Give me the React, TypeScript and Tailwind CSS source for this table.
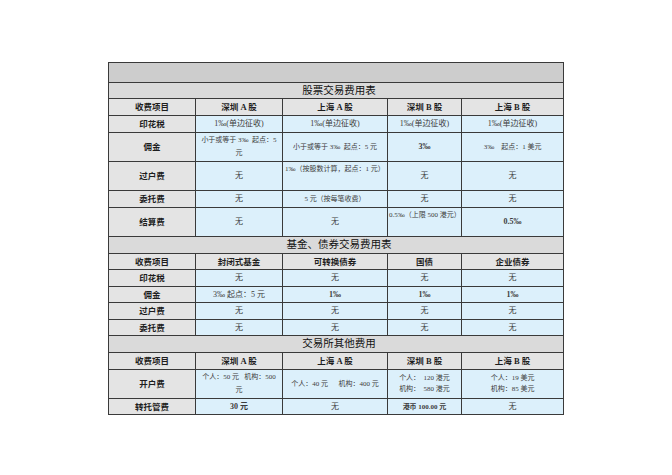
import React from "react";

const F = { fontFamily: '"Liberation Serif", "Noto Sans CJK SC", serif' };

type Cell = { t: React.ReactNode; cls?: string };

const L = "bg-[#e4e4e4] text-[#1e1e1e] font-bold text-[8.5px] border border-[#3a3a3a] text-center align-middle p-0 leading-[10px]";
const H = "bg-[#e4e4e4] text-[#1e1e1e] font-bold text-[8.5px] border border-[#3a3a3a] text-center align-middle p-0 leading-[10px]";
const V = "bg-[#dcf0fb] text-[#3c3c3c] text-[8px] border border-[#3a3a3a] text-center align-middle p-0 leading-[10px]";

function Title({ text, h }: { text: string; h: string }) {
  return (
    <tr className={h}>
      <td colSpan={5} className="bg-[#dadada] border border-[#3a3a3a] text-center align-middle p-0 text-[10.5px] text-[#111] leading-[12px]">
        <span className="pl-[6px]">{text}</span>
      </td>
    </tr>
  );
}

function Row({ label, cells, h, header }: { label: string; cells: Cell[]; h: string; header?: boolean }) {
  return (
    <tr className={h}>
      <td className={L}>{label}</td>
      {cells.map((c, i) => (
        <td key={i} className={(header ? H : V) + " " + (c.cls ?? "")}>
          {c.t}
        </td>
      ))}
    </tr>
  );
}

const s = (t: React.ReactNode, cls?: string): Cell => ({ t, cls });

export default function App() {
  return (
    <div className="w-[672px] h-[475px] bg-white pt-[62px] pl-[108px]" style={F}>
      <table className="table-fixed border-collapse border-[1.5px] border-[#2e2e2e] w-[455px]">
        <colgroup>
          <col className="w-[87px]" />
          <col className="w-[87px]" />
          <col className="w-[105px]" />
          <col className="w-[74px]" />
          <col className="w-[102px]" />
        </colgroup>
        <tbody>
          <tr className="h-[20px]">
            <td colSpan={5} className="bg-[#cdcdcd] border border-[#3a3a3a] p-0"></td>
          </tr>
          <Title text="股票交易费用表" h="h-[16px]" />
          <Row header h="h-[17px]" label="收费项目" cells={[s("深圳 A 股"), s("上海 A 股"), s("深圳 B 股"), s("上海 B 股")]} />
          <Row h="h-[17px]" label="印花税" cells={[s("1‰(单边征收)"), s("1‰(单边征收)"), s("1‰(单边征收)"), s("1‰(单边征收)")]} />
          <Row
            h="h-[29px]"
            label="佣金"
            cells={[
              s(<div className="px-[3px] text-[7px] leading-[13px]">小于或等于 3‰&nbsp; 起点：5 元</div>),
              s(<div className="text-[7px] whitespace-nowrap">小于或等于 3‰&nbsp; 起点：5 元</div>),
              s("3‰", "font-bold"),
              s(<div className="text-[7px] whitespace-nowrap">3‰&nbsp;&nbsp;&nbsp; 起点：1 美元</div>),
            ]}
          />
          <Row
            h="h-[29px]"
            label="过户费"
            cells={[
              s("无"),
              s(<div className="text-[7px] whitespace-nowrap pl-[2px] pt-[2px] text-left">1‰（按股数计算，起点：1 元）</div>, "!align-top"),
              s("无"),
              s("无"),
            ]}
          />
          <Row h="h-[17px]" label="委托费" cells={[s("无"), s(<span className="text-[7px]">5 元（按每笔收费）</span>), s("无"), s("无")]} />
          <Row
            h="h-[29px]"
            label="结算费"
            cells={[
              s("无"),
              s("无"),
              s(<div className="text-[7px] whitespace-nowrap overflow-hidden w-[73px] pl-[1px] pt-[2px] text-left">0.5‰（上限 500 港元）</div>, "!align-top"),
              s("0.5‰", "font-bold"),
            ]}
          />
          <Title text="基金、债券交易费用表" h="h-[17px]" />
          <Row header h="h-[16px]" label="收费项目" cells={[s("封闭式基金"), s("可转换债券"), s("国债"), s("企业债券")]} />
          <Row h="h-[17px]" label="印花税" cells={[s("无"), s("无"), s("无"), s("无")]} />
          <Row h="h-[16px]" label="佣金" cells={[s("3‰  起点：5 元"), s("1‰", "font-bold"), s("1‰", "font-bold"), s("1‰", "font-bold")]} />
          <Row h="h-[17px]" label="过户费" cells={[s("无"), s("无"), s("无"), s("无")]} />
          <Row h="h-[16px]" label="委托费" cells={[s("无"), s("无"), s("无"), s("无")]} />
          <Title text="交易所其他费用" h="h-[17px]" />
          <Row header h="h-[17px]" label="收费项目" cells={[s("深圳 A 股"), s("上海 A 股"), s("深圳 B 股"), s("上海 B 股")]} />
          <Row
            h="h-[29px]"
            label="开户费"
            cells={[
              s(<div className="px-[3px] text-[7px] leading-[13px]">个人：50 元&nbsp;&nbsp; 机构：500 元</div>),
              s(<div className="text-[7px] whitespace-nowrap">个人：40 元&nbsp;&nbsp;&nbsp;&nbsp;&nbsp; 机构：400 元</div>),
              s(
                <div className="text-[7px] leading-[11px]">
                  <div>个人：&nbsp; 120 港元</div>
                  <div>机构：&nbsp; 580 港元</div>
                </div>
              ),
              s(
                <div className="text-[7px] leading-[11px]">
                  <div>个人：19 美元</div>
                  <div>机构：85 美元</div>
                </div>
              ),
            ]}
          />
          <Row h="h-[16px]" label="转托管费" cells={[s("30 元", "font-bold"), s("无"), s(<span className="text-[7px] font-bold">港币 100.00 元</span>), s("无")]} />
        </tbody>
      </table>
    </div>
  );
}
